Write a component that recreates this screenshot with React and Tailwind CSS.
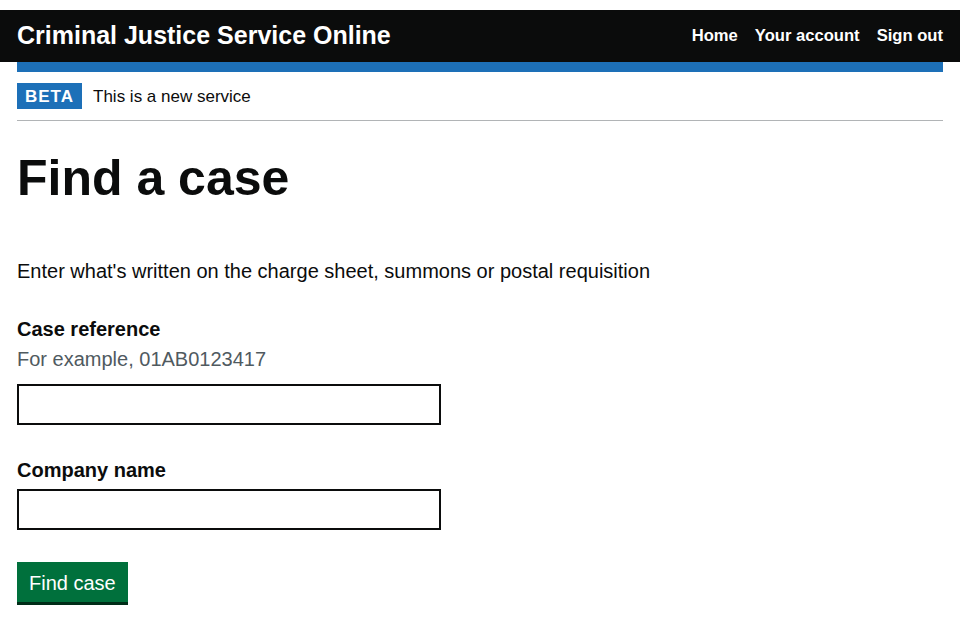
export default function App() {
  return (
    <div className="min-h-[640px] bg-white font-['Liberation_Sans',Arial,sans-serif] text-[#0b0c0c]">
      <div className="h-[10px]" />
      <header className="flex h-[52px] items-center justify-between bg-[#0b0c0c] px-[17px]">
        <a href="#" className="-mt-[2px] text-[25px] font-bold leading-[30px] text-white">
          Criminal Justice Service Online
        </a>
        <nav className="flex gap-[17px] text-[16.6px] font-bold leading-[20px] text-white">
          <a href="#">Home</a>
          <a href="#">Your account</a>
          <a href="#">Sign out</a>
        </nav>
      </header>

      <div className="mx-[17px]">
        <div className="h-[10px] bg-[#1d70b8]" />

        <div className="flex items-center gap-[11px] border-b border-[#b1b4b6] py-[11px]">
          <strong className="flex h-[26px] items-center bg-[#1d70b8] px-[8px] pt-[1px] text-[17px] font-bold tracking-[1px] text-white">
            BETA
          </strong>
          <span className="mt-[2px] text-[17px] leading-[20px]">This is a new service</span>
        </div>

        <main>
          <h1 className="mt-[32px] h-[50px] text-[50px] font-bold leading-[50px]">Find a case</h1>

          <p className="mt-[55px] text-[20px] leading-[26px]">
            Enter what's written on the charge sheet, summons or postal requisition
          </p>

          <form onSubmit={(e) => e.preventDefault()}>
            <label htmlFor="case-ref" className="mt-[32px] block text-[20px] font-bold leading-[26px]">
              Case reference
            </label>
            <div className="mt-[4px] text-[20px] leading-[26px] text-[#505a5f]">For example, 01AB0123417</div>
            <input
              id="case-ref"
              type="text"
              className="mt-[12px] block h-[41px] w-[424px] border-2 border-[#0b0c0c] px-[5px] text-[20px] outline-none"
            />

            <label htmlFor="company" className="mt-[32px] block text-[20px] font-bold leading-[26px]">
              Company name
            </label>
            <input
              id="company"
              type="text"
              className="mt-[6px] block h-[41px] w-[424px] border-2 border-[#0b0c0c] px-[5px] text-[20px] outline-none"
            />

            <button
              type="submit"
              className="mt-[32px] block bg-[#00703c] px-[12px] pb-[6px] pt-[8px] text-[20px] leading-[26px] text-white shadow-[0_3px_0_#002d18]"
            >
              Find case
            </button>
          </form>
        </main>
      </div>
    </div>
  );
}
